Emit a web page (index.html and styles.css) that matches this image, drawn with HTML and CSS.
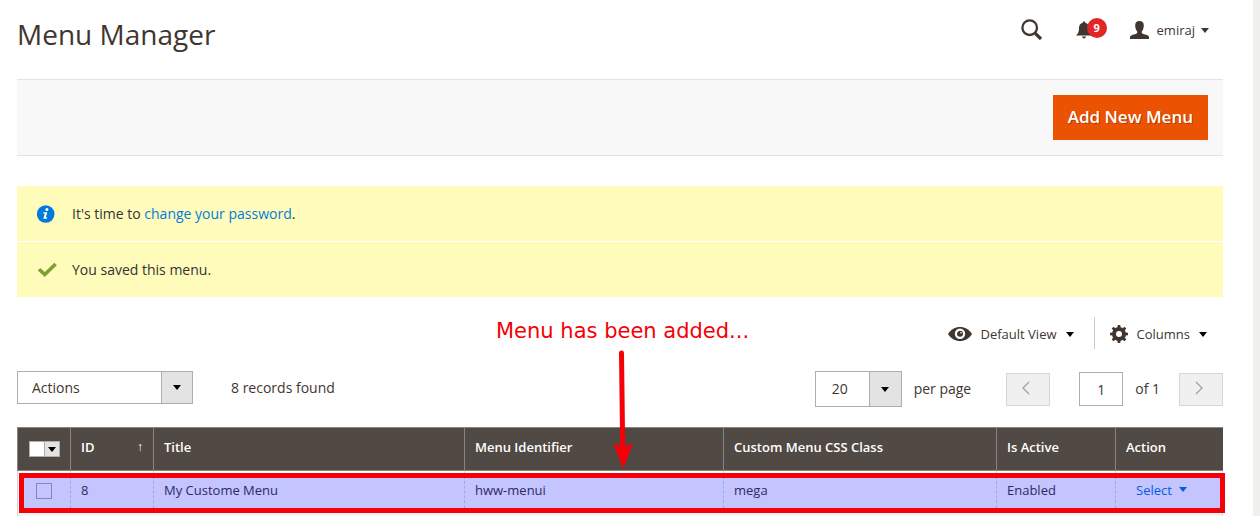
FILE: index.html
```html
<!DOCTYPE html>
<html lang="en">
<head>
<meta charset="utf-8">
<meta name="viewport" content="width=device-width, initial-scale=1">
<title>Menu Manager</title>
<link rel="stylesheet" href="styles.css">
</head>
<body>
<main class="page">
  <header class="header">
    <h1 class="title">Menu Manager</h1>
    <div class="header-tools">
      <button class="icon-btn" type="button" aria-label="Search">
        <svg width="22" height="22" viewBox="0 0 22 22" fill="none" stroke="#41362f"><circle cx="8.700" cy="8.700" r="7.300" stroke-width="2.300"/><path d="M13.800 13.800L20 20" stroke-width="3.200"/></svg>
      </button>
      <button class="icon-btn bell" type="button" aria-label="Notifications, 9 unread">
        <svg width="16" height="18" viewBox="0 0 16 18" fill="#41362f"><path d="M8 0.500c1 0 1.300.5 1.300 1.200 2.500.6 3.700 2.500 3.700 5.300 0 4 .8 5.500 3 7.500H0c2.200-2 3-3.500 3-7.500 0-2.800 1.200-4.700 3.700-5.300 0-.7.300-1.200 1.300-1.200zM6 15.500h4c-.3 1.300-1 2-2 2s-1.700-.7-2-2z"/></svg>
        <span class="badge">9</span>
      </button>
      <button class="icon-btn user" type="button">
        <svg width="19" height="18" viewBox="0 0 19 18" fill="#41362f"><path d="M9.500 0c3 0 4.300 1.600 4.300 4.500 0 2.500-.7 4.500-2 5.900v1.500c1 1 3.200 1.400 5 2.100 1.600.6 2.200 1.200 2.200 2.400V18H0v-1.600c0-1.200.6-1.800 2.200-2.400 1.800-.7 4-1.100 5-2.100v-1.500c-1.300-1.400-2-3.400-2-5.900C5.200 1.600 6.500 0 9.500 0z"/></svg>
        <span>emiraj</span>
        <span class="caret caret-brown"></span>
      </button>
    </div>
  </header>

  <div class="actions-bar">
    <button class="primary" type="button">Add New Menu</button>
  </div>

  <section class="messages" aria-label="Messages">
    <p class="message">
      <svg width="20" height="20" viewBox="0 0 20 20"><circle cx="8.700" cy="10" r="8.800" fill="#007bdb"/><circle cx="9.900" cy="5.600" r="1.500" fill="#fff"/><path d="M6.500 8.200h3.800l-1.400 5h1.300l-.4 1.500H6.300l1.500-5.100H6.100z" fill="#fff"/></svg>
      <span>It's time to <a href="#password">change your password</a>.</span>
    </p>
    <p class="message">
      <svg width="20" height="20" viewBox="0 0 20 20" fill="none" stroke="#79a22e" stroke-width="3.600"><path d="M2 9.200L7.800 14.600 18.600 4"/></svg>
      <span>You saved this menu.</span>
    </p>
  </section>

  <div class="view-row">
    <button class="view-btn" type="button">
      <svg width="24" height="14" viewBox="0 0 24 14"><path d="M0 7C3 2.300 7 0 12 0s9 2.300 12 7c-3 4.700-7 7-12 7S3 11.700 0 7z" fill="#41362f"/><circle cx="12" cy="6.800" r="4.100" fill="none" stroke="#fff" stroke-width="2.200"/><circle cx="13" cy="5.800" r=".8" fill="#fff"/></svg>
      <span>Default View</span>
      <span class="caret"></span>
    </button>
    <button class="view-btn columns" type="button">
      <svg width="18" height="18" viewBox="0 0 18 18"><circle cx="9" cy="9" r="5" fill="none" stroke="#41362f" stroke-width="4"/><g fill="#41362f"><path id="tooth" d="M7.400 3L7.700 0h2.600l.3 3z"/><use href="#tooth" transform="rotate(45 9 9)"/><use href="#tooth" transform="rotate(90 9 9)"/><use href="#tooth" transform="rotate(135 9 9)"/><use href="#tooth" transform="rotate(180 9 9)"/><use href="#tooth" transform="rotate(225 9 9)"/><use href="#tooth" transform="rotate(270 9 9)"/><use href="#tooth" transform="rotate(315 9 9)"/></g></svg>
      <span>Columns</span>
      <span class="caret"></span>
    </button>
  </div>

  <div class="grid-row">
    <div class="mass-actions">
      <div class="select select-actions">
        <select aria-label="Actions"><option>Actions</option></select>
        <span class="select-arrow"><span class="caret"></span></span>
      </div>
      <span>8 records found</span>
    </div>
    <div class="pager">
      <div class="select select-size">
        <select id="page-size"><option>20</option></select>
        <span class="select-arrow"><span class="caret"></span></span>
      </div>
      <label class="per-page" for="page-size">per page</label>
      <button class="nav-btn" type="button" aria-label="Previous page"><svg width="8" height="14" viewBox="0 0 8 14"><path d="M7 1L1 7l6 6"/></svg></button>
      <input class="page-input" id="page-number" type="text" value="1">
      <label class="of" for="page-number">of 1</label>
      <button class="nav-btn" type="button" aria-label="Next page"><svg width="8" height="14" viewBox="0 0 8 14"><path d="M1 1l6 6-6 6"/></svg></button>
    </div>
  </div>

  <div class="table-wrap">
    <table class="grid">
      <colgroup><col class="c-check"><col class="c-id"><col class="c-title"><col class="c-ident"><col class="c-css"><col class="c-active"><col class="c-action"></colgroup>
      <thead>
        <tr>
          <th class="check"><span class="multi"><input type="checkbox" aria-label="Select all"><button type="button" aria-label="Selection options"><span class="caret caret-wide"></span></button></span></th>
          <th><span class="sorted"><span>ID</span><span class="sort-arrow">↑</span></span></th>
          <th>Title</th>
          <th>Menu Identifier</th>
          <th>Custom Menu CSS Class</th>
          <th>Is Active</th>
          <th>Action</th>
        </tr>
      </thead>
      <tbody>
        <tr>
          <td class="check"><input class="row-check" type="checkbox" aria-label="Select My Custome Menu"></td>
          <td>8</td>
          <td>My Custome Menu</td>
          <td>hww-menui</td>
          <td>mega</td>
          <td>Enabled</td>
          <td><button class="select-link" type="button">Select<span class="caret caret-blue"></span></button></td>
        </tr>
      </tbody>
    </table>
    <div class="highlight"></div>
    <div class="callout">
      <span>Menu has been added...</span>
      <svg width="20" height="120" viewBox="0 0 20 120"><path d="M8.500 4L9.700 100" stroke="#f40006" stroke-width="5" stroke-linecap="round"/><path d="M0 94l9.700 4.500L20 94l-9.700 25.500z" fill="#f40006"/></svg>
    </div>
  </div>
  <div class="table-rest"></div>
</main>
</body>
</html>
```
FILE: styles.css
```css
* {
  box-sizing: border-box;
}

body {
  margin: 0;
  background: #f1f0ef;
  color: #41362f;
  font: 14px/20px "Open Sans", "Noto Sans", sans-serif;
}

button,
input,
select {
  font: inherit;
  color: inherit;
  margin: 0;
}

button {
  cursor: pointer;
}

.page {
  display: flex;
  flex-direction: column;
  min-height: 100vh;
  margin-right: 7px;
  padding: 0 30px 0 17px;
  background: #fff;
}

.header {
  display: flex;
  justify-content: space-between;
  align-items: flex-start;
  height: 79px;
  padding-top: 16px;
}

.title {
  margin: 0;
  font-size: 28px;
  line-height: 36px;
  font-weight: 400;
}

.header-tools {
  display: flex;
  align-items: center;
  height: 28px;
  padding-right: 14px;
}

.icon-btn,
.view-btn,
.select-link {
  display: flex;
  align-items: center;
  padding: 0;
  border: 0;
  background: none;
  font-size: 13px;
}

.bell {
  position: relative;
  margin: 0 38px 0 33px;
}

.badge {
  position: absolute;
  left: 11px;
  top: -3px;
  width: 20px;
  height: 20px;
  border-radius: 50%;
  background: #e22626;
  color: #fff;
  font-size: 11px;
  line-height: 20px;
  font-weight: 700;
}

.user svg {
  margin-right: 8px;
}

.caret {
  flex: none;
  margin-left: 9px;
  border: 4px solid transparent;
  border-top: 5px solid #000;
  border-bottom: 0;
}

.caret-brown {
  margin-left: 6px;
  border-top-color: #41362f;
}

.actions-bar {
  display: flex;
  justify-content: flex-end;
  padding: 15px;
  border: solid #e3e3e3;
  border-width: 1px 0;
  background: #f8f8f8;
}

.primary {
  height: 45px;
  padding: 0 15px 2px;
  border: 0;
  background: #eb5202;
  color: #fff;
  font-size: 17px;
  font-weight: 600;
  text-shadow: 1px 1px 0 rgba(0, 0, 0, 0.25);
}

.messages {
  display: grid;
  gap: 1px;
  margin-top: 30px;
}

.message {
  display: flex;
  align-items: center;
  gap: 15px;
  height: 55px;
  margin: 0;
  padding-left: 20px;
  background: #fffbbb;
  color: #333;
}

.message a {
  color: #007bdb;
  text-decoration: none;
}

.view-row {
  display: flex;
  justify-content: flex-end;
  margin-top: 20px;
  padding-right: 16px;
}

.view-btn {
  height: 32px;
  padding-top: 2px;
}

.view-btn svg {
  margin-right: 9px;
}

.columns {
  margin-left: 20px;
  padding-left: 15px;
  border-left: 1px solid #ccc;
}

.grid-row {
  display: flex;
  align-items: flex-start;
  justify-content: space-between;
  margin-top: 22px;
}

.mass-actions {
  display: flex;
  align-items: center;
  gap: 38px;
}

.select {
  display: grid;
  height: 33px;
}

.select > * {
  grid-area: 1 / 1;
}

.select select {
  appearance: none;
  width: 100%;
  padding: 0 14px;
  border: 1px solid #adadad;
  border-radius: 0;
  background: #fff;
}

.select-arrow {
  display: flex;
  align-items: center;
  justify-content: center;
  justify-self: end;
  width: 32px;
  border: 1px solid #adadad;
  background: #e3e3e3;
  pointer-events: none;
}

.select-arrow .caret {
  margin: 0;
}

.select-actions {
  width: 176px;
}

.select-size {
  width: 87px;
  height: 36px;
}

.select-size select {
  padding: 0 16px;
}

.select-size .select-arrow {
  width: 33px;
}

.pager {
  display: flex;
  align-items: center;
}

.per-page {
  margin: 0 35px 0 12px;
}

.nav-btn {
  display: flex;
  align-items: center;
  justify-content: center;
  width: 44px;
  height: 33px;
  padding: 0 4px 3px 0;
  border: 1px solid #d6d6d6;
  background: #f0f0f0;
}

.nav-btn svg {
  fill: none;
  stroke: #a5a3a2;
  stroke-width: 1.4;
}

.page-input {
  width: 44px;
  height: 34px;
  margin: 0 12px 0 29px;
  padding: 0;
  border: 1px solid #adadad;
  text-align: center;
}

.of {
  margin-right: 19px;
}

.table-wrap {
  position: relative;
  margin-top: 20px;
}

.grid {
  width: 100%;
  table-layout: fixed;
  border-collapse: separate;
  border-spacing: 0;
  font-size: 13px;
}

.c-check { width: 53px; }
.c-id { width: 83px; }
.c-title { width: 311px; }
.c-ident { width: 259px; }
.c-css { width: 273px; }
.c-active { width: 119px; }

.grid th {
  height: 44px;
  padding: 0 10px 5px;
  border: solid #8a837f;
  border-width: 1px 0 1px 1px;
  background: #514943;
  color: #fff;
  font-weight: 600;
  text-align: left;
}

.grid td {
  height: 42px;
  padding: 0 10px 5px;
  border-left: 1px dashed #d6d6d6;
}

.grid td:first-child {
  border-left: 1px solid #d6d6d6;
}

.grid td:last-child {
  border-right: 1px solid #d6d6d6;
}

.grid .check {
  padding: 0 0 0 11px;
}

.grid td.check {
  padding-bottom: 2px;
}

.multi {
  display: flex;
  width: 31px;
  height: 16px;
  border: 1px solid #adadad;
}

.multi input {
  appearance: none;
  flex: 1;
  background: #fff;
}

.multi button {
  display: flex;
  align-items: center;
  justify-content: center;
  width: 15px;
  padding: 0;
  border: 0;
  border-left: 1px solid #adadad;
  background: #e3e3e3;
}

.caret-wide {
  margin: 0;
}

.sorted {
  display: flex;
  justify-content: space-between;
}

.sort-arrow {
  font-size: 12px;
  font-weight: 400;
}

.row-check {
  appearance: none;
  display: block;
  width: 16px;
  height: 16px;
  margin-left: 7px;
  border: 1px solid #adadad;
  background: #fff;
}

.select-link {
  margin-left: 10px;
  color: #007bdb;
}

.caret-blue {
  margin-left: 7px;
  border-top-color: #007bdb;
}

.highlight {
  position: absolute;
  inset: 46px -2px 0 2px;
  border: 5px solid #f40006;
  background: rgba(0, 0, 255, 0.23);
  background-clip: padding-box;
  pointer-events: none;
}

.callout {
  position: absolute;
  left: 479px;
  bottom: 44px;
  display: flex;
  flex-direction: column;
  align-items: center;
  color: #f40006;
  font: 21px/36px "DejaVu Sans", sans-serif;
  white-space: nowrap;
  pointer-events: none;
}

.table-rest {
  flex: 1;
  border: solid #d6d6d6;
  border-width: 0 1px;
  background: #f5f5f5;
}
```
